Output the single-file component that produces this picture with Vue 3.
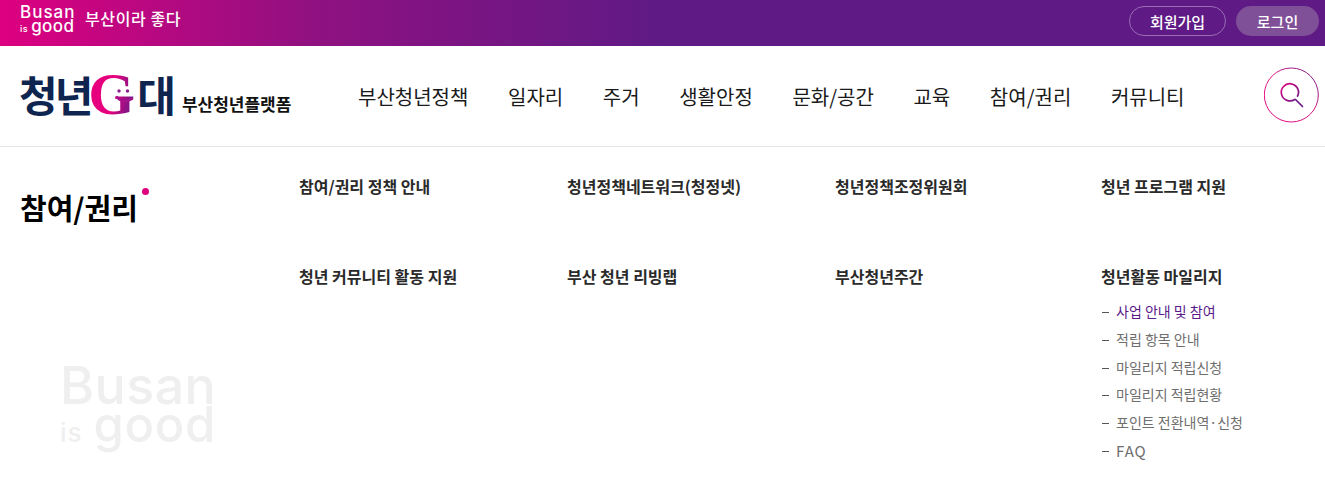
<script setup>
const nav = ['부산청년정책', '일자리', '주거', '생활안정', '문화/공간', '교육', '참여/권리', '커뮤니티']
const cells = [
  { label: '참여/권리 정책 안내' },
  { label: '청년정책네트워크(청정넷)' },
  { label: '청년정책조정위원회' },
  { label: '청년 프로그램 지원' },
  { label: '청년 커뮤니티 활동 지원' },
  { label: '부산 청년 리빙랩' },
  { label: '부산청년주간' },
  {
    label: '청년활동 마일리지',
    subs: ['사업 안내 및 참여', '적립 항목 안내', '마일리지 적립신청', '마일리지 적립현황', '포인트 전환내역·신청', 'FAQ'],
  },
]
</script>

<template>
  <div class="page">
    <div class="topbar">
      <div class="brand">
        <div class="bg-logo small-logo">
          <span class="l1">Busan</span>
          <span class="l2"><i>is</i><b>good</b></span>
        </div>
        <span class="slogan">부산이라 좋다</span>
      </div>
      <div class="auth">
        <a class="btn outline">회원가입</a>
        <a class="btn filled">로그인</a>
      </div>
    </div>

    <header class="mainbar">
      <div class="logo">
        <span class="mark">청년</span>
        <span class="g-wrap">
          <span class="g">G</span>
          <svg class="face" width="22" height="20" viewBox="0 0 22 20">
            <circle cx="5" cy="3" r="1.7" fill="#8e1f8f" />
            <circle cx="13.5" cy="3" r="1.7" fill="#8e1f8f" />
            <path d="M3 9 C6 14 12 14 18 11" fill="none" stroke="#a3148c" stroke-width="2.4" stroke-linecap="round" />
          </svg>
        </span>
        <span class="mark">대</span>
        <span class="platform">부산청년플랫폼</span>
      </div>
      <nav class="nav">
        <a v-for="n in nav" :key="n">{{ n }}</a>
      </nav>
      <button class="search" aria-label="검색">
        <svg width="56" height="56" viewBox="0 0 56 56">
          <defs>
            <linearGradient id="ring" x1="0" y1="1" x2="1" y2="0">
              <stop offset="0" stop-color="#e6007e" />
              <stop offset="0.55" stop-color="#dd1a84" />
              <stop offset="1" stop-color="#5f1a85" />
            </linearGradient>
            <linearGradient id="glass" x1="0" y1="0" x2="1" y2="1">
              <stop offset="0" stop-color="#e0057f" />
              <stop offset="1" stop-color="#6a1b87" />
            </linearGradient>
          </defs>
          <circle cx="27.3" cy="28" r="27" fill="#fff" stroke="url(#ring)" stroke-width="1" />
          <path d="M31 32.2 A8.6 8.6 0 1 1 33.2 29.8" fill="none" stroke="url(#glass)" stroke-width="1.7" />
          <path d="M31.5 32.5 L38.5 39.5" stroke="#6a1b87" stroke-width="1.7" stroke-linecap="round" />
        </svg>
      </button>
    </header>

    <section class="mega">
      <div class="side">
        <h2 class="title">참여/권리<span class="dot"></span></h2>
        <div class="bg-logo watermark">
          <span class="l1">Busan</span>
          <span class="l2"><i>is</i><b>good</b></span>
        </div>
      </div>
      <div class="grid">
        <div v-for="c in cells" :key="c.label" class="cell">
          <div class="cell-title">{{ c.label }}</div>
          <ul v-if="c.subs" class="subs">
            <li v-for="(s, i) in c.subs" :key="s" :class="{ active: i === 0, latin: s === 'FAQ' }">{{ s }}</li>
          </ul>
        </div>
      </div>
    </section>
  </div>
</template>

<style>
html, body { margin: 0; background: #fff; }
</style>

<style scoped>
.page {
  width: 1325px;
  height: 483px;
  overflow: hidden;
  font-family: "Noto Sans CJK KR", "Noto Sans", sans-serif;
  color: #111;
}
.topbar {
  height: 46px;
  box-sizing: border-box;
  padding: 0 6px 0 20px;
  display: flex;
  align-items: center;
  justify-content: space-between;
  background: linear-gradient(90deg, #dd0080 0%, #8f1181 24%, #5f1a85 50%, #5f1a85 100%);
}
.brand { display: flex; align-items: center; gap: 10px; }
.slogan { color: #fff; font-size: 16px; font-weight: 500; line-height: 20px; letter-spacing: 0.6px; margin-top: -10px; }
.bg-logo { font-family: Inter, sans-serif; display: flex; flex-direction: column; }
.bg-logo span { display: block; }
.bg-logo i { font-style: normal; }
.bg-logo b { font-weight: inherit; }
.small-logo { color: #fff; font-weight: 500; width: 55px; margin-top: -5px; }
.small-logo .l1 { font-size: 17px; line-height: 14px; letter-spacing: 1px; }
.small-logo .l2 { display: flex; align-items: baseline; line-height: 15px; font-size: 17px; letter-spacing: 0.4px; }
.small-logo .l2 i { font-size: 9px; margin-right: 3px; letter-spacing: 0.5px; }
.auth { display: flex; gap: 10px; margin-bottom: 4px; }
.btn {
  width: 97px;
  height: 30px;
  box-sizing: border-box;
  border-radius: 15px;
  color: #fff;
  font-size: 15px;
  font-weight: 500;
  display: flex;
  align-items: center;
  justify-content: center;
}
.btn.outline { border: 1px solid #9a6db5; }
.btn.filled { width: 83px; background: #7f4f97; }
.mainbar {
  height: 101px;
  box-sizing: border-box;
  border-bottom: 1px solid #e4e4e4;
  position: relative;
  display: flex;
  align-items: center;
  padding-left: 19px;
}
.logo { width: 339px; display: flex; align-items: center; height: 50px; margin-bottom: 4px; }
.mark { font-size: 42px; font-weight: 700; color: #0e2550; line-height: 50px; letter-spacing: -3px; }
.g-wrap { position: relative; width: 49px; height: 50px; display: block; margin-left: -2px; }
.g {
  display: block;
  font-family: "Liberation Serif", serif;
  font-weight: 700;
  font-size: 60px;
  line-height: 50px;
  background: linear-gradient(100deg, #e6007e 0%, #e6007e 50%, #6a1b87 90%);
  -webkit-background-clip: text;
  background-clip: text;
  color: transparent;
}
.face { position: absolute; left: 26px; top: 19px; }
.platform { font-size: 17px; font-weight: 700; color: #111; margin: 18px 0 0 9px; white-space: nowrap; }
.nav { display: flex; gap: 39.6px; font-size: 20px; color: #1a1a1a; white-space: nowrap; margin-top: 2px; }
.nav a { line-height: 30px; }
.search {
  position: absolute;
  right: 5px;
  top: 21px;
  width: 56px;
  height: 56px;
  padding: 0;
  border: 0;
  background: none;
  display: block;
}
.mega { display: flex; padding-left: 20px; }
.side { width: 279px; flex: none; display: flex; flex-direction: column; }
.title {
  margin: 40px 0 0;
  font-size: 29px;
  font-weight: 700;
  line-height: 40px;
  color: #000;
  position: relative;
  width: fit-content;
}
.dot {
  position: absolute;
  right: -11px;
  top: 1px;
  width: 7px;
  height: 7px;
  border-radius: 50%;
  background: #e0007f;
}
.watermark {
  margin: 139px 0 0 40px;
  color: #efefef;
  font-weight: 500;
}
.watermark .l1 { font-size: 52px; line-height: 39px; letter-spacing: 0.4px; }
.watermark .l2 { display: flex; align-items: baseline; font-size: 49px; line-height: 39px; letter-spacing: 0.6px; }
.watermark .l2 i { font-size: 26px; margin-right: 11px; letter-spacing: 1px; }
.grid {
  display: grid;
  grid-template-columns: 268px 268px 266px 1fr;
  grid-template-rows: 90px auto;
  padding-top: 29px;
}
.cell-title { font-size: 16px; font-weight: 700; line-height: 21px; color: #2a2a2a; white-space: nowrap; }
.subs { list-style: none; margin: 11px 0 0; padding: 0; }
.subs li {
  font-size: 14px;
  line-height: 27.8px;
  color: #6e6e6e;
  padding-left: 15px;
  position: relative;
  white-space: nowrap;
}
.subs li::before {
  content: "";
  position: absolute;
  left: 1px;
  top: 14px;
  width: 7px;
  height: 1px;
  background: #555;
}
.subs li.active { color: #5a1a8a; }
.subs li.latin { font-size: 15px; letter-spacing: 1px; }
</style>
